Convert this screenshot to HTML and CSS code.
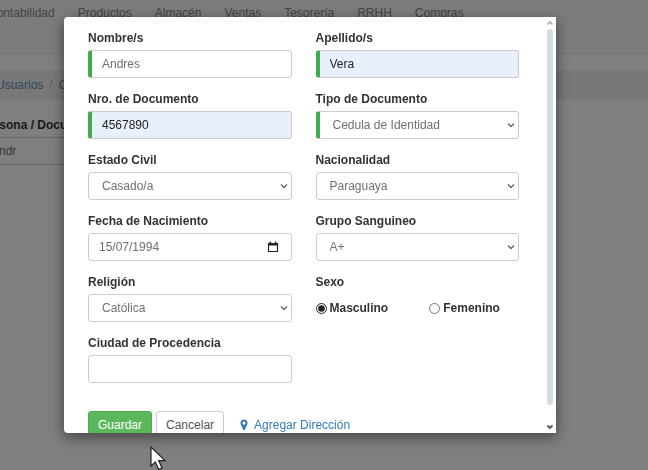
FILE: index.html
```html
<!DOCTYPE html>
<html lang="es">
<head>
    <meta charset="UTF-8">
    <meta name="viewport" content="width=device-width, initial-scale=1.0">
    <title>Usuarios</title>
    <link rel="stylesheet" href="styles.css">
</head>
<body>
    <div class="page">
        <nav class="navbar">
            <a href="#">Contabilidad</a>
            <a href="#">Productos</a>
            <a href="#">Almacén</a>
            <a href="#">Ventas</a>
            <a href="#">Tesorería</a>
            <a href="#">RRHH</a>
            <a href="#">Compras</a>
        </nav>
        <div class="breadcrumb">
            <a href="#">Usuarios</a>
            <span class="separator">/</span>
            <span class="current">Crear</span>
        </div>
        <div class="search">
            <label for="buscar">Persona / Documento</label>
            <input type="text" id="buscar" class="form-control" value="Andr">
        </div>
    </div>

    <div class="backdrop">
        <div class="modal" role="dialog" aria-label="Persona">
            <form class="modal-body">
                <div class="fields">
                    <div class="form-group">
                        <label for="nombre">Nombre/s</label>
                        <input type="text" id="nombre" class="form-control required" value="Andres">
                    </div>
                    <div class="form-group">
                        <label for="apellido">Apellido/s</label>
                        <input type="text" id="apellido" class="form-control required autofill" value="Vera">
                    </div>
                    <div class="form-group">
                        <label for="documento">Nro. de Documento</label>
                        <input type="text" id="documento" class="form-control required autofill" value="4567890">
                    </div>
                    <div class="form-group">
                        <label for="tipo">Tipo de Documento</label>
                        <select id="tipo" class="form-control required"><option>Cedula de Identidad</option></select>
                    </div>
                    <div class="form-group">
                        <label for="estado">Estado Civil</label>
                        <select id="estado" class="form-control"><option>Casado/a</option></select>
                    </div>
                    <div class="form-group">
                        <label for="nacionalidad">Nacionalidad</label>
                        <select id="nacionalidad" class="form-control"><option>Paraguaya</option></select>
                    </div>
                    <div class="form-group">
                        <label for="fecha">Fecha de Nacimiento</label>
                        <div class="form-control date-box">
                            <input type="text" id="fecha" value="15/07/1994">
                            <button type="button" class="date-button" aria-label="Abrir calendario">
                                <svg width="12" height="12" viewBox="0 0 12 12"><path d="M1.5 2.5h9v8h-9z" fill="none" stroke="#222" stroke-width="1.2"/><path d="M1 2h10v2.6H1zM2.6 0.6h1.5v2H2.6zM7.9 0.6h1.5v2H7.9z" fill="#222"/></svg>
                            </button>
                        </div>
                    </div>
                    <div class="form-group">
                        <label for="grupo">Grupo Sanguineo</label>
                        <select id="grupo" class="form-control"><option>A+</option></select>
                    </div>
                    <div class="form-group">
                        <label for="religion">Religión</label>
                        <select id="religion" class="form-control"><option>Católica</option></select>
                    </div>
                    <fieldset class="form-group">
                        <legend>Sexo</legend>
                        <div class="radios">
                            <label><input type="radio" name="sexo" checked>Masculino</label>
                            <label><input type="radio" name="sexo">Femenino</label>
                        </div>
                    </fieldset>
                    <div class="form-group">
                        <label for="ciudad">Ciudad de Procedencia</label>
                        <input type="text" id="ciudad" class="form-control">
                    </div>
                </div>
                <div class="actions">
                    <button type="button" class="btn btn-success">Guardar</button>
                    <button type="button" class="btn btn-default">Cancelar</button>
                    <a href="#" class="add-address">
                        <svg width="8" height="12" viewBox="0 0 8 12"><path fill="#337ab7" fill-rule="evenodd" d="M4 .6A3.500 3.500 0 0 0 .5 4.100c0 .8.2 1.300.5 1.900l2.300 5c.3.500 1.100.500 1.400 0L7 6c.3-.6.5-1.100.5-1.900A3.500 3.500 0 0 0 4 .6zm0 1.900a1.600 1.600 0 1 1 0 3.200 1.600 1.600 0 0 1 0-3.200z"/></svg>
                        Agregar Dirección
                    </a>
                </div>
            </form>
            <div class="scrollbar">
                <svg width="8" height="6" viewBox="0 0 8 6"><path d="M1.500 4.500L4 2l2.500 2.500" fill="none" stroke="#aaa" stroke-width="1.600"/></svg>
                <div class="thumb"></div>
                <svg width="8" height="6" viewBox="0 0 8 6"><path d="M1.500 1.500L4 4l2.500-2.500" fill="none" stroke="#555" stroke-width="1.800"/></svg>
            </div>
        </div>
    </div>

    <svg class="cursor" width="16" height="24" viewBox="0 0 16 24"><path d="M1 1v19l4.300-4.100 3.500 7.500 3.200-1.500-3.300-7.300H15z" fill="#fff" stroke="#222" stroke-width="1.200"/></svg>
</body>
</html>
```

FILE: styles.css
```css
* {
    box-sizing: border-box;
}
body {
    margin: 0;
    min-height: 100vh;
    overflow: hidden;
    font-family: "Liberation Sans", Arial, sans-serif;
    font-size: 12px;
    line-height: 20px;
    color: #333;
    background: #fff;
}
a {
    color: #337ab7;
    text-decoration: none;
}
label, legend {
    font-weight: bold;
}
.page {
    margin-left: -20px;
}
.navbar {
    display: flex;
    gap: 23px;
    height: 54px;
    padding: 3px 8px;
    background: #f8f8f8;
    border-bottom: 1px solid #eee;
}
.navbar a {
    color: #888;
}
.breadcrumb {
    display: flex;
    gap: 6px;
    margin-top: 16px;
    padding: 5px 16px;
    background: #f0f0f0;
}
.breadcrumb a {
    color: #5a8fbf;
}
.breadcrumb .separator {
    color: #bbb;
}
.breadcrumb .current {
    color: #888;
}
.search {
    display: flex;
    flex-direction: column;
    gap: 2px;
    width: 200px;
    padding-top: 15px;
}
.form-control {
    display: block;
    width: 100%;
    height: 28px;
    padding: 0 10px;
    font: inherit;
    color: #707070;
    background-color: #fff;
    border: 1px solid #ccc;
    border-radius: 3px;
}
.form-control.required {
    border-left: 4px solid #3fae49;
}
.form-control.autofill {
    color: #222;
    background-color: #e8f0fe;
}
select.form-control {
    appearance: none;
    padding: 0 20px 0 13px;
    background-image: url("data:image/svg+xml,%3Csvg xmlns='http://www.w3.org/2000/svg' width='8' height='6' viewBox='0 0 8 6'%3E%3Cpath d='M1 1.500l3 3 3-3' fill='none' stroke='%23666' stroke-width='1.400'/%3E%3C/svg%3E");
    background-repeat: no-repeat;
    background-position: right 3px center;
}
.backdrop {
    position: fixed;
    inset: 0;
    display: flex;
    padding: 17px 92px 37px 64px;
    background: rgba(0, 0, 0, 0.5);
}
.modal {
    flex: 1;
    display: flex;
    overflow: hidden;
    background: #fff;
    border-radius: 4px 0 0 4px;
    box-shadow: 0 4px 14px rgba(0, 0, 0, 0.5);
}
.modal-body {
    flex: 1;
    padding: 11px 24px;
}
.fields {
    display: grid;
    grid-template-columns: 1fr 1fr;
    gap: 11px 24px;
}
.form-group {
    display: flex;
    flex-direction: column;
    gap: 2px;
    min-width: 0;
    margin: 0;
    padding: 0;
    border: 0;
}
legend {
    padding: 0;
}
.date-box {
    display: flex;
    align-items: center;
    padding-right: 12px;
}
.date-box input {
    flex: 1;
    min-width: 0;
    padding: 0;
    font: inherit;
    color: inherit;
    background: none;
    border: 0;
}
.date-button {
    display: flex;
    padding: 0;
    background: none;
    border: 0;
}
.radios {
    display: grid;
    grid-template-columns: 1fr 1fr;
    gap: 24px;
    padding-top: 6px;
}
.radios label {
    display: flex;
    align-items: center;
    gap: 3px;
}
.radios input {
    width: 11px;
    height: 11px;
    margin: 0;
    accent-color: #222;
}
.actions {
    display: flex;
    align-items: center;
    gap: 4px;
    margin-top: 28px;
}
.btn {
    height: 28px;
    padding: 0 9px;
    font: inherit;
    color: #555;
    background: #fff;
    border: 1px solid #ccc;
    border-radius: 3px;
}
.btn-success {
    color: #fff;
    background: #5cb85c;
    border-color: #4cae4c;
}
.add-address {
    display: flex;
    align-items: center;
    gap: 6px;
    margin-left: 12px;
}
.scrollbar {
    display: flex;
    flex-direction: column;
    align-items: center;
    gap: 3px;
    width: 13px;
    padding: 3px 0;
}
.thumb {
    flex: 1;
    width: 6px;
    margin-bottom: 16px;
    background: #d0dce6;
    border-radius: 3px;
}
.cursor {
    position: fixed;
    left: 150px;
    top: 446px;
}
```
